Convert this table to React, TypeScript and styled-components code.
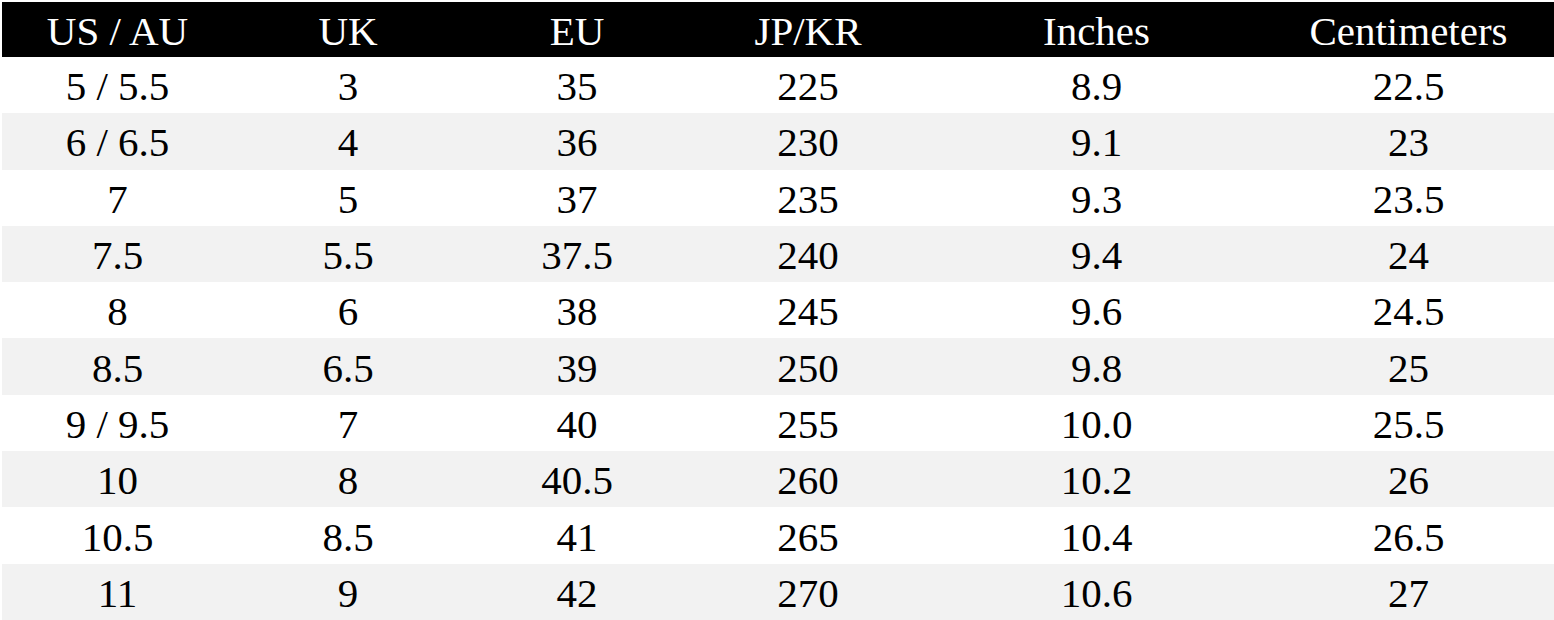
import React from 'react';
import styled, { createGlobalStyle } from 'styled-components';

const columns = ['US / AU', 'UK', 'EU', 'JP/KR', 'Inches', 'Centimeters'];

const sizes: string[][] = [
  ['5 / 5.5', '3', '35', '225', '8.9', '22.5'],
  ['6 / 6.5', '4', '36', '230', '9.1', '23'],
  ['7', '5', '37', '235', '9.3', '23.5'],
  ['7.5', '5.5', '37.5', '240', '9.4', '24'],
  ['8', '6', '38', '245', '9.6', '24.5'],
  ['8.5', '6.5', '39', '250', '9.8', '25'],
  ['9 / 9.5', '7', '40', '255', '10.0', '25.5'],
  ['10', '8', '40.5', '260', '10.2', '26'],
  ['10.5', '8.5', '41', '265', '10.4', '26.5'],
  ['11', '9', '42', '270', '10.6', '27'],
];

const GlobalStyle = createGlobalStyle`
  html, body {
    margin: 0;
    padding: 0;
    background: #ffffff;
  }
`;

const App: React.FC = () => {
  return (
    <>
      <GlobalStyle />
      <Table>
        <HeaderRow>
          {columns.map(col => (
            <Cell key={col}>{col}</Cell>
          ))}
        </HeaderRow>
        {sizes.map((row, i) => (
          <Row key={row[0]} striped={i % 2 === 1}>
            {row.map((val, j) => (
              <Cell key={j}>{val}</Cell>
            ))}
          </Row>
        ))}
      </Table>
    </>
  );
};

export default App;

const Table = styled.div`
  padding: 2px 0 0 2px;
  width: 1552px;
  font-family: 'Liberation Serif', 'Times New Roman', serif;
  font-size: 41px;
`;

const HeaderRow = styled.div`
  display: grid;
  grid-template-columns: 231px 230px 228px 234px 343px 281px;
  padding-right: 3px;
  height: 55px;
  background: #000000;
  color: #ffffff;
`;

const Row = styled.div<{ striped: boolean }>`
  display: grid;
  grid-template-columns: 231px 230px 228px 234px 343px 281px;
  padding-right: 3px;
  height: 56.3px;
  background: ${({ striped }) => (striped ? '#f2f2f2' : '#ffffff')};
  color: #000000;
`;

const Cell = styled.div`
  display: flex;
  align-items: center;
  justify-content: center;
  padding-top: 2px;
  white-space: nowrap;
`;
